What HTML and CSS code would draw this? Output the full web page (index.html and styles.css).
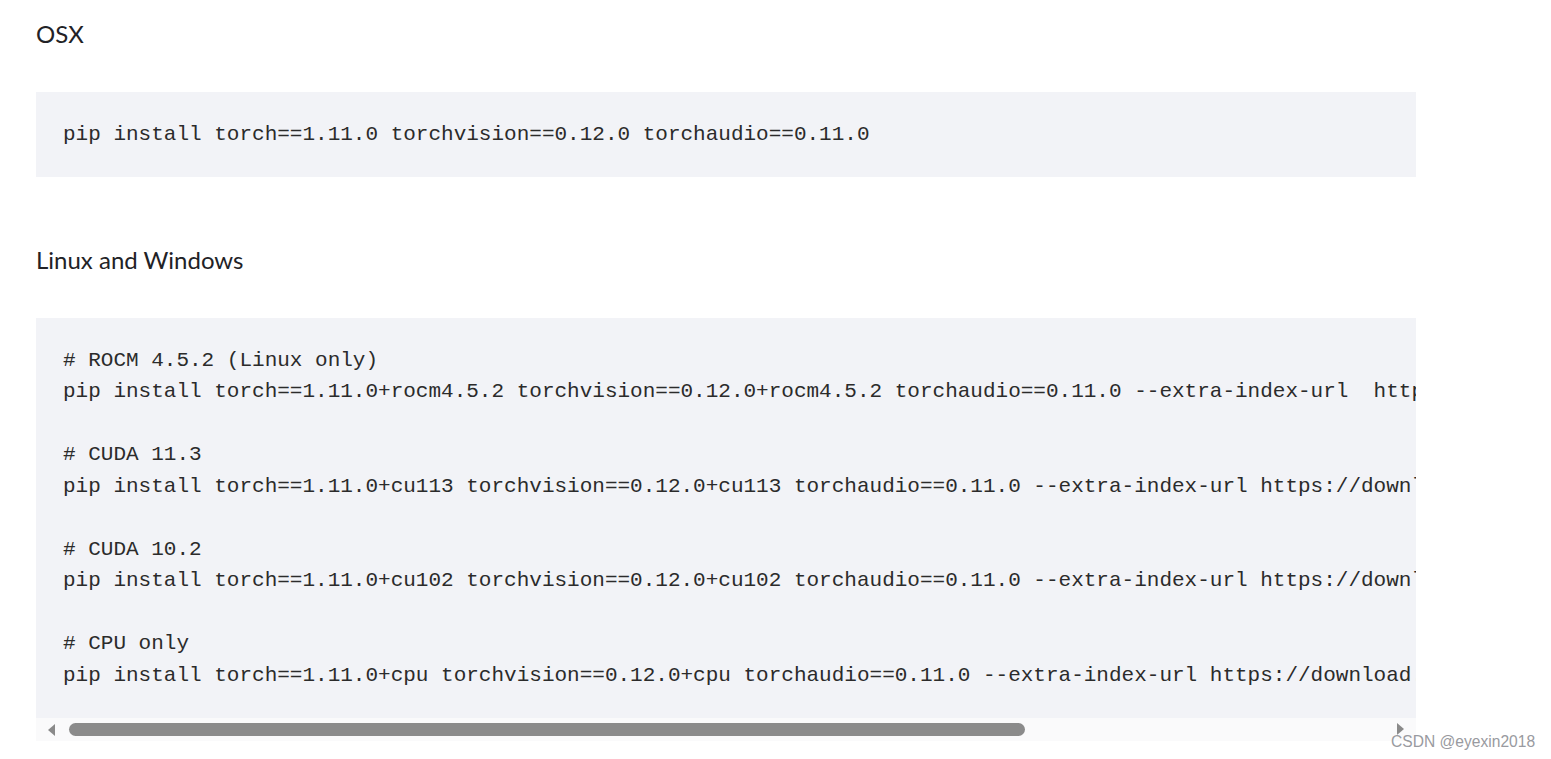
FILE: index.html
```html
<!DOCTYPE html>
<html>
<head>
<meta charset="utf-8">
<link rel="stylesheet" href="styles.css">
</head>
<body>
<div class="page">
  <h3 class="title first">OSX</h3>
  <div class="code-wrap">
    <pre class="code">pip install torch==1.11.0 torchvision==0.12.0 torchaudio==0.11.0</pre>
  </div>
  <h3 class="title second">Linux and Windows</h3>
  <div class="code-wrap">
    <pre class="code"># ROCM 4.5.2 (Linux only)
pip install torch==1.11.0+rocm4.5.2 torchvision==0.12.0+rocm4.5.2 torchaudio==0.11.0 --extra-index-url  https://download.pytorch.org/whl/rocm4.5.2

# CUDA 11.3
pip install torch==1.11.0+cu113 torchvision==0.12.0+cu113 torchaudio==0.11.0 --extra-index-url https://download.pytorch.org/whl/cu113

# CUDA 10.2
pip install torch==1.11.0+cu102 torchvision==0.12.0+cu102 torchaudio==0.11.0 --extra-index-url https://download.pytorch.org/whl/cu102

# CPU only
pip install torch==1.11.0+cpu torchvision==0.12.0+cpu torchaudio==0.11.0 --extra-index-url https://download.pytorch.org/whl/cpu</pre>
    <div class="hscroll">
      <span class="arrow left"></span>
      <div class="track"><div class="thumb"></div></div>
      <span class="arrow right"></span>
    </div>
  </div>
</div>
<div class="watermark">CSDN @eyexin2018</div>
</body>
</html>
```
FILE: styles.css
```css
html, body {
  margin: 0;
  padding: 0;
  background: #ffffff;
}
body {
  position: relative;
  width: 1551px;
  height: 759px;
  overflow: hidden;
}
.page {
  padding-left: 36px;
  width: 1380px;
}
.title {
  font-family: Lato, "Liberation Sans", sans-serif;
  font-weight: 400;
  font-size: 24px;
  line-height: 32px;
  color: #222226;
  margin: 0;
}
.title.first {
  padding-top: 18px;
  margin-bottom: 42px;
}
.title.second {
  margin-top: 67px;
  margin-bottom: 42px;
}
.code-wrap {
  background: #f2f3f7;
  overflow: hidden;
}
.code {
  margin: 0;
  padding: 26.5px 0 27px 27px;
  font-family: "Liberation Mono", "DejaVu Sans Mono", monospace;
  font-size: 21px;
  line-height: 31.5px;
  color: #2b2b2b;
  white-space: pre;
  overflow: hidden;
}
.hscroll {
  height: 23px;
  background: #fafafb;
  display: flex;
  align-items: center;
  padding: 0 12px;
  gap: 14px;
}
.track {
  flex: 1;
  height: 13px;
  display: flex;
  align-items: center;
}
.thumb {
  width: 956px;
  height: 13px;
  border-radius: 7px;
  background: #8b8b8b;
}
.arrow {
  width: 0;
  height: 0;
  border-top: 6px solid transparent;
  border-bottom: 6px solid transparent;
}
.arrow.left {
  border-right: 7px solid #8a8a8a;
}
.arrow.right {
  border-left: 7px solid #8a8a8a;
  margin-bottom: 1px;
}
.watermark {
  position: absolute;
  left: 1391px;
  top: 733px;
  font-family: "Liberation Sans", Arial, sans-serif;
  font-size: 15.6px;
  line-height: 18px;
  color: #999aa0;
  text-shadow: 0 0 2px #ffffff;
}
```
